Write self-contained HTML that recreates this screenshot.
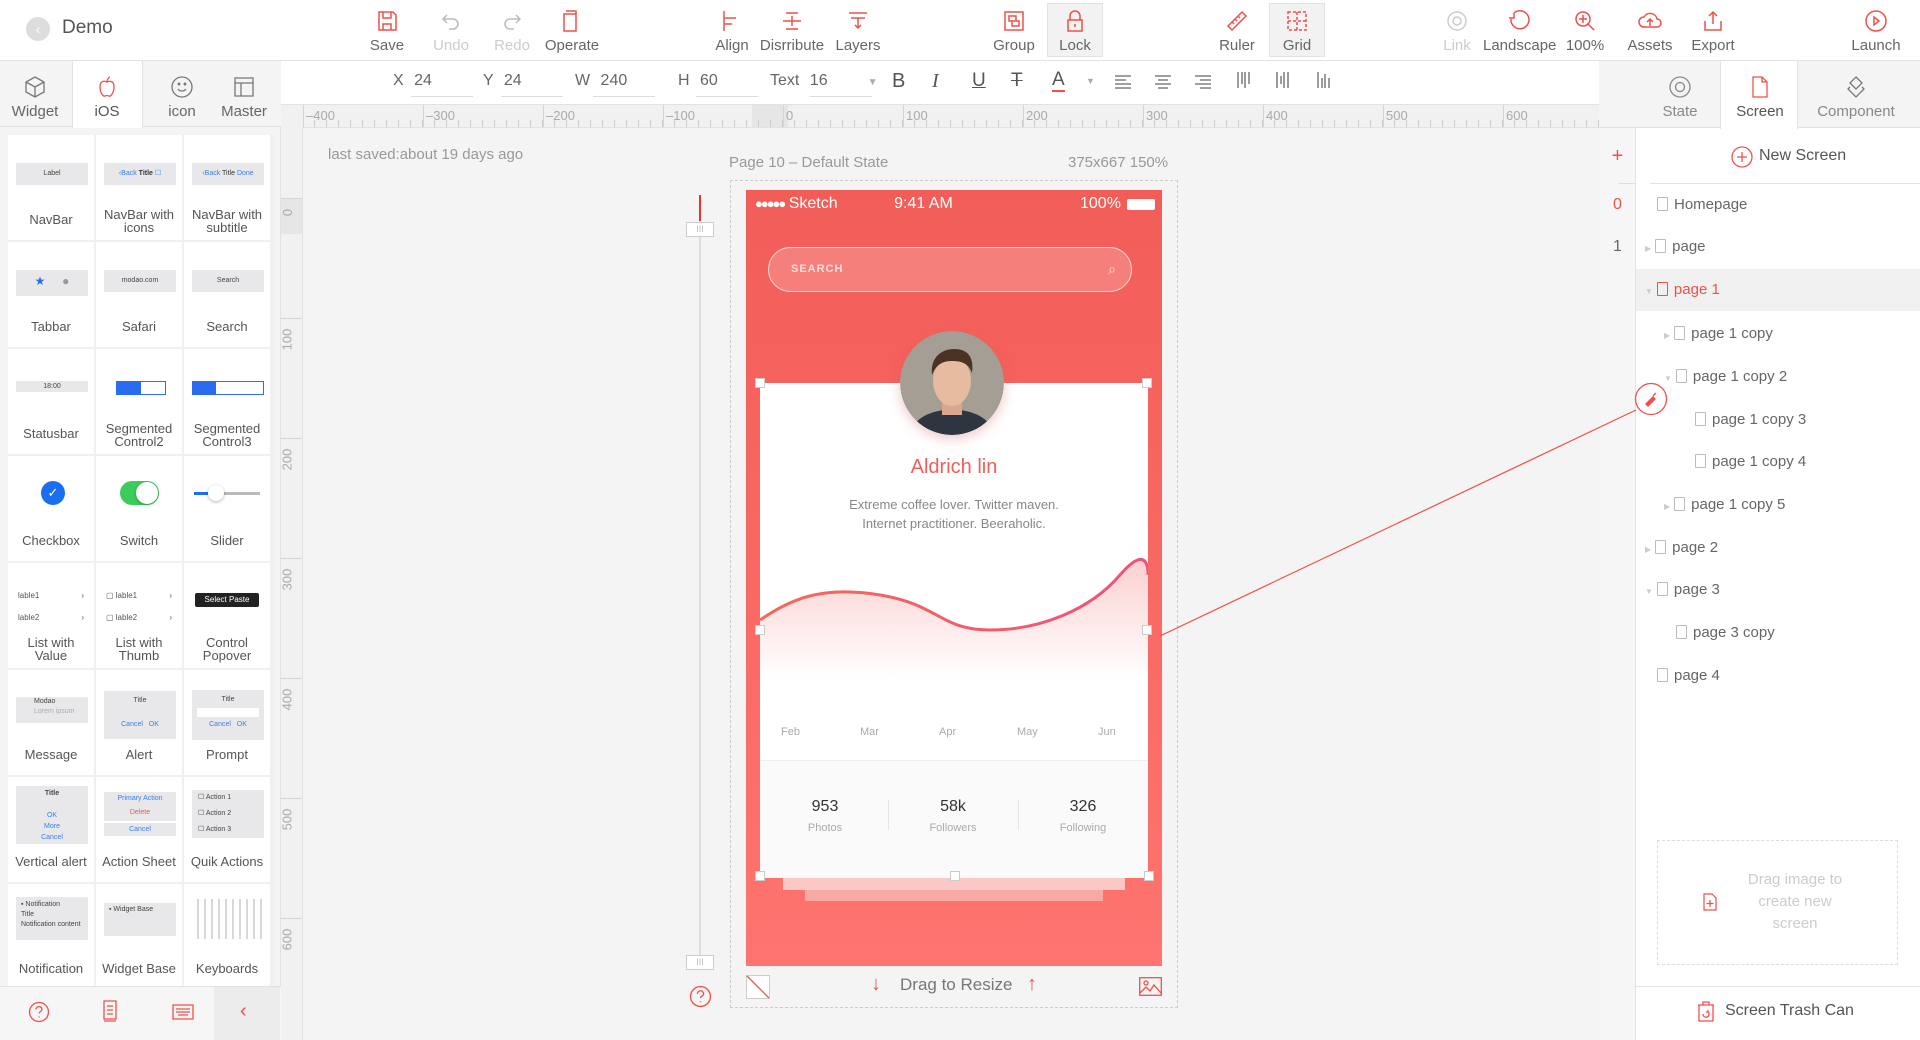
<!DOCTYPE html>
<html><head><meta charset="utf-8"><style>
*{box-sizing:border-box;margin:0;padding:0}
html{overflow:hidden}
body{width:1920px;height:1040px;overflow:hidden;background:#f4f4f4;font-family:"Liberation Sans",sans-serif;color:#666;position:relative}
.a{position:absolute}
.tb{position:absolute;top:0;text-align:center;font-size:15px;color:#666;width:70px;margin-left:-35px}
.tb svg{display:block;margin:9px auto 4px;height:24px;width:24px}
.tb.d{color:#ccc}
.cell{position:absolute;width:88px;height:107px;background:#fff;border-right:2px solid #f0f0f0;border-bottom:2px solid #f0f0f0;text-align:center;font-size:13px;color:#555;line-height:13px}
.cell .th{position:absolute;left:8px;top:28px;width:72px;height:22px;background:#e8e8ea;font-size:7px;color:#444;line-height:22px}
.cell .lb{position:absolute;left:0;right:0;top:73px}
.pg{position:absolute;font-size:15px;color:#666;height:20px;line-height:20px}
.pg i{display:inline-block;width:11px;height:14px;border:1px solid #bbb;vertical-align:-2px;margin-right:6px;border-radius:1px}
.fi{position:absolute;top:72px;font-size:16px;color:#666}
.fi u{position:absolute;left:18px;top:24px;height:1px;background:#ddd;text-decoration:none;display:block}
</style></head><body>
<!-- top bar -->
<div class="a" style="left:0;top:0;width:1920px;height:61px;background:#fff;border-bottom:1px solid #e2e2e2"></div>
<div class="a" style="left:26px;top:17px;width:24px;height:24px;border-radius:50%;background:#ddd;color:#fff;font-size:14px;text-align:center;line-height:24px">‹</div>
<div class="a" style="left:62px;top:17px;font-size:19px;color:#555">Demo</div>

<div class="tb" style="left:387px"><svg viewBox="0 0 24 24" fill="none" stroke="#f0504a" stroke-width="1.5"><path d="M4 3h14l3 3v15H4z M8 3v6h8V3 M8 21v-6h8v6"/></svg>Save</div>
<div class="tb d" style="left:451px"><svg viewBox="0 0 24 24" fill="none" stroke="#bbb" stroke-width="1.5"><path d="M8 6L4 10l4 4 M4 10h10a5 5 0 010 10h-4"/></svg>Undo</div>
<div class="tb d" style="left:512px"><svg viewBox="0 0 24 24" fill="none" stroke="#bbb" stroke-width="1.5"><path d="M16 6l4 4-4 4 M20 10H10a5 5 0 000 10h4"/></svg>Redo</div>
<div class="tb" style="left:572px"><svg viewBox="0 0 24 24" fill="none" stroke="#f0504a" stroke-width="1.5"><path d="M6 2h10v3 M4 5h12v17H4z"/></svg>Operate</div>
<div class="tb" style="left:732px"><svg viewBox="0 0 24 24" fill="none" stroke="#f0504a" stroke-width="1.5"><path d="M4 2v20 M4 9h12 M4 15h8"/></svg>Align</div>
<div class="tb" style="left:792px"><svg viewBox="0 0 24 24" fill="none" stroke="#f0504a" stroke-width="1.5"><path d="M6 4h12 M3 12h18 M6 20h12 M12 7v10"/></svg>Disrribute</div>
<div class="tb" style="left:858px"><svg viewBox="0 0 24 24" fill="none" stroke="#f0504a" stroke-width="1.5"><path d="M3 4h18 M5 9h14 M12 9v10 M9 16l3 3 3-3"/></svg>Layers</div>
<div class="tb" style="left:1014px"><svg viewBox="0 0 24 24" fill="none" stroke="#f0504a" stroke-width="1.5"><path d="M3 3h18v18H3z M7 7h7v5H7z M10 12h7v5h-7z"/></svg>Group</div>
<div class="a" style="left:1047px;top:3px;width:56px;height:54px;background:#f2f2f2;border:1px solid #e2e2e2"></div>
<div class="tb" style="left:1075px"><svg viewBox="0 0 24 24" fill="none" stroke="#f0504a" stroke-width="1.5"><path d="M7 11V7a5 5 0 0110 0v4 M5 11h14v11H5z M12 15v3"/></svg>Lock</div>
<div class="tb" style="left:1237px"><svg viewBox="0 0 24 24" fill="none" stroke="#f0504a" stroke-width="1.5"><path d="M3 17L17 3l4 4L7 21z M7 13l2 2 M10 10l2 2 M13 7l2 2"/></svg>Ruler</div>
<div class="a" style="left:1269px;top:3px;width:56px;height:54px;background:#f2f2f2;border:1px solid #e2e2e2"></div>
<div class="tb" style="left:1297px"><svg viewBox="0 0 24 24" fill="none" stroke="#f0504a" stroke-width="1.5" stroke-dasharray="3 2"><path d="M3 3h18v18H3z M3 12h18 M12 3v18"/></svg>Grid</div>
<div class="tb d" style="left:1457px"><svg viewBox="0 0 24 24" fill="none" stroke="#ccc" stroke-width="1.5"><circle cx="12" cy="12" r="9"/><circle cx="12" cy="12" r="4"/></svg>Link</div>
<div class="tb" style="left:1518px"><svg viewBox="0 0 24 24" fill="none" stroke="#f0504a" stroke-width="1.5"><path d="M8 4a9 9 0 11-3 6 M8 4v5H3"/></svg>Landscape</div>
<div class="tb" style="left:1585px"><svg viewBox="0 0 24 24" fill="none" stroke="#f0504a" stroke-width="1.5"><circle cx="10" cy="10" r="7"/><path d="M15 15l6 6 M10 6v8 M6 10h8"/></svg>100%</div>
<div class="tb" style="left:1650px"><svg viewBox="0 0 24 24" fill="none" stroke="#f0504a" stroke-width="1.5"><path d="M6 18a5 5 0 010-10 7 7 0 0113 2 4 4 0 010 8z M12 17v-7 M9 13l3-3 3 3"/></svg>Assets</div>
<div class="tb" style="left:1713px"><svg viewBox="0 0 24 24" fill="none" stroke="#f0504a" stroke-width="1.5"><path d="M12 15V3 M8 7l4-4 4 4 M4 12v9h16v-9"/></svg>Export</div>
<div class="tb" style="left:1876px"><svg viewBox="0 0 24 24" fill="none" stroke="#f0504a" stroke-width="1.5"><circle cx="12" cy="12" r="10"/><path d="M10 8l5 4-5 4z"/></svg>Launch</div>

<!-- left panel -->
<div class="a" style="left:0;top:61px;width:281px;height:979px;background:#f4f4f4;border-right:1px solid #e2e2e2"></div>
<div class="a" style="left:0;top:61px;width:281px;height:66px;background:#f4f4f4;border-bottom:1px solid #e2e2e2"></div>
<div class="a" style="left:72px;top:61px;width:71px;height:67px;background:#fff;border-left:1px solid #e2e2e2;border-right:1px solid #e2e2e2"></div>
<div class="tb" style="left:35px;top:66px;width:72px;margin-left:-36px"><svg viewBox="0 0 24 24" fill="none" stroke="#777" stroke-width="1.3"><path d="M12 2l9 5v10l-9 5-9-5V7z M3 7l9 5 9-5 M12 12v10"/></svg>Widget</div>
<div class="tb" style="left:107px;top:66px"><svg viewBox="0 0 24 24" fill="none" stroke="#f0504a" stroke-width="1.3"><path d="M12 7c-2-1-7-2-7 5 0 5 3 10 5 9 1-.5 3-.5 4 0 2 1 5-4 5-9 0-7-5-6-7-5z M12 7c0-3 2-5 3-5"/></svg><span style="color:#555">iOS</span></div>
<div class="tb" style="left:182px;top:66px"><svg viewBox="0 0 24 24" fill="none" stroke="#777" stroke-width="1.3"><circle cx="12" cy="12" r="10"/><path d="M8 14a5 5 0 008 0"/><circle cx="9" cy="9" r=".8"/><circle cx="15" cy="9" r=".8"/></svg>icon</div>
<div class="tb" style="left:244px;top:66px"><svg viewBox="0 0 24 24" fill="none" stroke="#777" stroke-width="1.3"><path d="M3 3h18v18H3z M3 8h18 M9 8v13"/></svg>Master</div>

<div class="a" style="left:8px;top:135px;width:266px;height:851px;background:#f0f0f0;overflow:hidden">
<div class="cell" style="left:0;top:0"><div class="th">Label</div><div class="lb" style="top:78px">NavBar</div></div>
<div class="cell" style="left:88px;top:0"><div class="th" style="color:#3a7cf0">‹Back <b style="color:#333">Title</b> ☐</div><div class="lb">NavBar with<br>icons</div></div>
<div class="cell" style="left:176px;top:0"><div class="th" style="color:#3a7cf0">‹Back <span style="color:#333">Title</span> Done</div><div class="lb">NavBar with<br>subtitle</div></div>
<div class="cell" style="left:0;top:107px"><div class="th" style="height:26px;color:#2a6cf0;font-size:12px">★ &nbsp; &nbsp; <span style="color:#999">●</span></div><div class="lb" style="top:78px">Tabbar</div></div>
<div class="cell" style="left:88px;top:107px"><div class="th">modao.com</div><div class="lb" style="top:78px">Safari</div></div>
<div class="cell" style="left:176px;top:107px"><div class="th">Search</div><div class="lb" style="top:78px">Search</div></div>
<div class="cell" style="left:0;top:214px"><div class="th" style="height:11px;line-height:11px;top:32px">18:00</div><div class="lb" style="top:78px">Statusbar</div></div>
<div class="cell" style="left:88px;top:214px"><div class="a" style="left:20px;top:32px;width:50px;height:14px;border:1px solid #2a6cf0;background:linear-gradient(90deg,#2a6cf0 50%,#fff 50%)"></div><div class="lb">Segmented<br>Control2</div></div>
<div class="cell" style="left:176px;top:214px"><div class="a" style="left:8px;top:32px;width:72px;height:14px;border:1px solid #2a6cf0;background:linear-gradient(90deg,#2a6cf0 33%,#fff 33%)"></div><div class="lb">Segmented<br>Control3</div></div>
<div class="cell" style="left:0;top:321px"><div class="a" style="left:33px;top:25px;width:24px;height:24px;border-radius:50%;background:#1a6ef0;color:#fff;font-size:13px;line-height:24px">✓</div><div class="lb" style="top:78px">Checkbox</div></div>
<div class="cell" style="left:88px;top:321px"><div class="a" style="left:24px;top:25px;width:39px;height:24px;border-radius:12px;background:#3ccc5c"></div><div class="a" style="left:40px;top:26px;width:22px;height:22px;border-radius:50%;background:#fff;box-shadow:0 1px 3px rgba(0,0,0,.3)"></div><div class="lb" style="top:78px">Switch</div></div>
<div class="cell" style="left:176px;top:321px"><div class="a" style="left:10px;top:36px;width:66px;height:3px;background:linear-gradient(90deg,#1a6ef0 30%,#bbb 30%)"></div><div class="a" style="left:24px;top:29px;width:16px;height:16px;border-radius:50%;background:#fff;box-shadow:0 1px 3px rgba(0,0,0,.3)"></div><div class="lb" style="top:78px">Slider</div></div>
<div class="cell" style="left:0;top:428px"><div class="a" style="left:10px;top:22px;font-size:8px;text-align:left;width:66px;line-height:22px">lable1 <span style="float:right">›</span><br>lable2 <span style="float:right">›</span></div><div class="lb">List with<br>Value</div></div>
<div class="cell" style="left:88px;top:428px"><div class="a" style="left:10px;top:22px;font-size:8px;text-align:left;width:66px;line-height:22px">▢ lable1 <span style="float:right">›</span><br>▢ lable2 <span style="float:right">›</span></div><div class="lb">List with<br>Thumb</div></div>
<div class="cell" style="left:176px;top:428px"><div class="a" style="left:11px;top:30px;width:64px;height:14px;background:#222;color:#fff;font-size:8px;line-height:14px;border-radius:2px">Select Paste</div><div class="lb">Control<br>Popover</div></div>
<div class="cell" style="left:0;top:535px"><div class="th" style="top:27px;height:26px;line-height:10px;text-align:left;padding-left:18px">Modao<br><span style="color:#aaa">Lorem ipsum</span></div><div class="lb" style="top:78px">Message</div></div>
<div class="cell" style="left:88px;top:535px"><div class="th" style="top:21px;height:48px;line-height:12px;padding-top:4px">Title<br><br><span style="color:#3a7cf0">Cancel &nbsp; OK</span></div><div class="lb" style="top:78px">Alert</div></div>
<div class="cell" style="left:176px;top:535px"><div class="th" style="top:20px;height:50px;line-height:12px;padding-top:4px">Title<br><span style="display:block;background:#fff;margin:2px 5px;height:9px"></span><span style="color:#3a7cf0">Cancel &nbsp; OK</span></div><div class="lb" style="top:78px">Prompt</div></div>
<div class="cell" style="left:0;top:642px"><div class="th" style="top:9px;height:58px;line-height:11px;padding-top:2px"><b>Title</b><br><br><span style="color:#3a7cf0">OK<br>More<br>Cancel</span></div><div class="lb" style="top:78px">Vertical alert</div></div>
<div class="cell" style="left:88px;top:642px"><div class="th" style="top:15px;height:29px;line-height:14px;color:#3a7cf0">Primary Action<br><span style="color:#e55">Delete</span></div><div class="th" style="top:46px;height:13px;line-height:13px;color:#3a7cf0">Cancel</div><div class="lb" style="top:78px">Action Sheet</div></div>
<div class="cell" style="left:176px;top:642px"><div class="th" style="top:13px;height:48px;line-height:16px;text-align:left;padding-left:6px">☐ Action 1<br>☐ Action 2<br>☐ Action 3</div><div class="lb" style="top:78px">Quik Actions</div></div>
<div class="cell" style="left:0;top:749px"><div class="th" style="top:13px;height:43px;line-height:10px;text-align:left;padding:3px 5px">▪ Notification<br>Title<br>Notification content</div><div class="lb" style="top:78px">Notification</div></div>
<div class="cell" style="left:88px;top:749px"><div class="th" style="top:19px;height:33px;line-height:14px;text-align:left;padding-left:5px">▪ Widget Base</div><div class="lb" style="top:78px">Widget Base</div></div>
<div class="cell" style="left:176px;top:749px"><div class="th" style="top:15px;height:40px;background:repeating-linear-gradient(90deg,#fff 0 5px,#d8d8dc 5px 7px)"></div><div class="lb" style="top:78px">Keyboards</div></div>
</div>
<!-- bottom-left toolbar -->
<div class="a" style="left:0;top:986px;width:281px;height:54px;background:#f6f6f6;border-top:1px solid #e2e2e2"></div>
<div class="a" style="left:214px;top:987px;width:66px;height:53px;background:#ececec"></div>
<svg class="a" style="left:28px;top:1001px" width="22" height="22" viewBox="0 0 22 22" fill="none" stroke="#f0504a" stroke-width="1.3"><circle cx="11" cy="11" r="9.5"/><path d="M8 8.5a3 3 0 016 0c0 2-3 2-3 4 M11 15.5v1"/></svg>
<svg class="a" style="left:102px;top:1000px" width="16" height="22" viewBox="0 0 16 22" fill="none" stroke="#f0504a" stroke-width="1.3"><path d="M2 1h12v18H2z M5 6h6 M5 10h6 M5 14h6 M2 21h12"/></svg>
<svg class="a" style="left:172px;top:1004px" width="22" height="16" viewBox="0 0 22 16" fill="none" stroke="#f0504a" stroke-width="1.3"><path d="M1 1h20v14H1z M4 5h14 M4 8h14 M6 11h10"/></svg>
<div class="a" style="left:240px;top:1000px;color:#f0504a;font-size:20px">‹</div>

<!-- format bar -->
<div class="a" style="left:281px;top:61px;width:1318px;height:44px;background:#fff"></div>
<div class="fi" style="left:393px">X <span style="margin-left:6px">24</span><u style="width:62px"></u></div>
<div class="fi" style="left:483px">Y <span style="margin-left:6px">24</span><u style="width:62px"></u></div>
<div class="fi" style="left:575px">W <span style="margin-left:6px">240</span><u style="width:62px"></u></div>
<div class="fi" style="left:678px">H <span style="margin-left:6px">60</span><u style="width:62px"></u></div>
<div class="fi" style="left:770px">Text <span style="margin-left:6px">16</span><span style="margin-left:40px;font-size:10px;color:#aaa">▼</span><u style="left:40px;width:62px"></u></div>
<div class="a" style="left:892px;top:70px;font-size:20px;color:#555">B</div>
<div class="a" style="left:932px;top:70px;font-size:20px;color:#555;font-family:'Liberation Serif',serif;font-style:italic">I</div>
<div class="a" style="left:972px;top:70px;font-size:19px;color:#555;text-decoration:underline">U</div>
<div class="a" style="left:1011px;top:70px;font-size:19px;color:#555;text-decoration:line-through">T</div>
<div class="a" style="left:1052px;top:70px;font-size:19px;color:#555;border-bottom:2px solid #f0504a;line-height:20px">A</div>
<div class="a" style="left:1086px;top:76px;font-size:9px;color:#aaa">▼</div>
<svg class="a" style="left:1115px;top:72px" width="110" height="20" viewBox="0 0 110 20" fill="none" stroke="#666" stroke-width="1.3"><path d="M0 4h16 M0 8h11 M0 12h16 M0 16h16 M40 4h16 M43 8h10 M40 12h16 M43 16h10 M80 4h16 M85 8h11 M80 12h16 M85 16h11"/></svg>
<svg class="a" style="left:1235px;top:70px" width="110" height="22" viewBox="0 0 110 22" fill="none" stroke="#666" stroke-width="1.3"><path d="M3 2v16 M7 2v12 M10 2v16 M14 2v12 M42 2v16 M46 6v8 M49 2v16 M53 2v16 M83 2v16 M87 8v10 M90 4v14 M94 8v10"/></svg>

<!-- rulers -->
<div class="a" style="left:281px;top:104px;width:1318px;height:24px;background:#f1f1f1;border-top:1px solid #e2e2e2;border-bottom:1px solid #e2e2e2;overflow:hidden;font-size:13px;color:#aaa">
<div class="a" style="left:471px;top:0;width:36px;height:22px;background:#e6e6e6"></div>
<div class="a" style="left:0;top:0;width:1318px;height:22px;background:repeating-linear-gradient(90deg,transparent 0 11px,#ccc 11px 12px) 22px 15px/100% 7px no-repeat"></div>
<div class="a" style="left:22px;top:0;width:1296px;height:22px;background:repeating-linear-gradient(90deg,#d4d4d4 0 1px,transparent 1px 120px)"></div>
<span class="a" style="left:25px;top:3px">–400</span><span class="a" style="left:145px;top:3px">–300</span><span class="a" style="left:265px;top:3px">–200</span><span class="a" style="left:385px;top:3px">–100</span><span class="a" style="left:505px;top:3px">0</span><span class="a" style="left:625px;top:3px">100</span><span class="a" style="left:745px;top:3px">200</span><span class="a" style="left:865px;top:3px">300</span><span class="a" style="left:985px;top:3px">400</span><span class="a" style="left:1105px;top:3px">500</span><span class="a" style="left:1225px;top:3px">600</span>
</div>
<div class="a" style="left:281px;top:127px;width:22px;height:913px;background:#f1f1f1;border-right:1px solid #e2e2e2;font-size:13px;color:#aaa;overflow:hidden">
<div class="a" style="left:0;top:71px;width:21px;height:36px;background:#e6e6e6"></div>
<div class="a" style="left:0;top:71px;width:21px;height:840px;background:repeating-linear-gradient(180deg,#d4d4d4 0 1px,transparent 1px 120px)"></div>
<span class="a" style="left:3px;top:78px;transform:rotate(-90deg)">0</span>
<span class="a" style="left:-5px;top:205px;transform:rotate(-90deg)">100</span><span class="a" style="left:-5px;top:325px;transform:rotate(-90deg)">200</span><span class="a" style="left:-5px;top:445px;transform:rotate(-90deg)">300</span><span class="a" style="left:-5px;top:565px;transform:rotate(-90deg)">400</span><span class="a" style="left:-5px;top:685px;transform:rotate(-90deg)">500</span><span class="a" style="left:-5px;top:805px;transform:rotate(-90deg)">600</span>
</div>

<!-- canvas -->
<div class="a" style="left:328px;top:146px;font-size:15px;color:#999">last saved:about 19 days ago</div>
<div class="a" style="left:729px;top:154px;font-size:15px;color:#999">Page 10 – Default State</div>
<div class="a" style="left:1068px;top:154px;font-size:15px;color:#999">375x667 150%</div>
<div class="a" style="left:730px;top:180px;width:448px;height:828px;border:1px dashed #ccc"></div>
<div class="a" style="left:699px;top:195px;width:2px;height:765px;background:#ddd"></div>
<div class="a" style="left:699px;top:195px;width:2px;height:26px;background:#f0302a"></div>
<div class="a" style="left:686px;top:222px;width:28px;height:15px;border:1px solid #ccc;background:#fff;font-size:9px;text-align:center;line-height:13px;color:#bbb">III</div>
<div class="a" style="left:686px;top:955px;width:28px;height:15px;border:1px solid #ccc;background:#fff;font-size:9px;text-align:center;line-height:13px;color:#bbb">III</div>
<svg class="a" style="left:689px;top:985px" width="23" height="23" viewBox="0 0 22 22" fill="none" stroke="#f0504a" stroke-width="1.3"><circle cx="11" cy="11" r="9.5"/><path d="M8 8.5a3 3 0 016 0c0 2-3 2-3 4 M11 15.5v1"/></svg>

<!-- phone -->
<div class="a" style="left:746px;top:190px;width:416px;height:776px;background:linear-gradient(180deg,#f25d58,#ff7470);overflow:hidden">
 <div class="a" style="left:9px;top:5px;color:#fff;font-size:16px;width:400px"><span style="letter-spacing:-2px;font-size:13px">●●●●●</span> Sketch <span style="margin-left:52px">9:41 AM</span><span style="position:absolute;left:325px">100%</span><span style="position:absolute;left:372px;top:4px;width:28px;height:11px;background:#fff;border-radius:2px"></span></div>
 <div class="a" style="left:22px;top:57px;width:364px;height:45px;border-radius:23px;border:1.5px solid #ffd2d0;background:rgba(255,255,255,.2);color:#ffdcda;font-size:11px;letter-spacing:1px;line-height:42px;padding-left:22px;font-weight:bold">SEARCH<span style="position:absolute;right:14px;top:0;font-weight:normal;font-size:14px">⌕</span></div>
 <div class="a" style="left:14px;top:193px;width:388px;height:495px;background:#fff"></div>
 <div class="a" style="left:14px;top:570px;width:388px;height:118px;background:#fafafa;border-top:1px solid #eee"></div>
 <div class="a" style="left:37px;top:688px;width:342px;height:12px;background:#fbc8c6"></div>
 <div class="a" style="left:59px;top:700px;width:298px;height:11px;background:#f8a9a6"></div>
 <svg class="a" style="left:154px;top:141px;border-radius:50%;box-shadow:0 4px 12px rgba(200,80,80,.3)" width="104" height="104" viewBox="0 0 104 104"><defs><clipPath id="c"><circle cx="52" cy="52" r="52"/></clipPath></defs><g clip-path="url(#c)"><rect width="104" height="104" fill="#a59e94"/><path d="M10 104c4-18 20-24 42-26 22 2 38 8 42 26z" fill="#2e3440"/><path d="M42 70h20v14H42z" fill="#d9a88c"/><ellipse cx="52" cy="50" rx="19" ry="25" fill="#e6bba0"/><path d="M32 44c-2-18 10-26 22-26 14 0 20 8 18 24-3-8-8-12-20-12-10 0-16 4-20 14z" fill="#4a3224"/></g></svg>
 <div class="a" style="left:0;width:416px;top:266px;text-align:center;font-size:20px;color:#f25d58">Aldrich lin</div>
 <div class="a" style="left:0;width:416px;top:305px;text-align:center;font-size:13px;color:#888;line-height:19px">Extreme coffee lover. Twitter maven.<br>Internet practitioner. Beeraholic.</div>
 <svg class="a" style="left:14px;top:360px" width="388" height="130" viewBox="0 0 388 130"><defs><linearGradient id="g" x1="0" y1="0" x2="0" y2="1"><stop offset="0" stop-color="#fbd0d0"/><stop offset="1" stop-color="#fff"/></linearGradient><linearGradient id="s" x1="0" x2="1"><stop offset="0" stop-color="#f56a5a"/><stop offset="1" stop-color="#f2507a"/></linearGradient></defs><path d="M0 70C30 50 60 35 120 45S180 80 230 80 330 60 360 25 388 25 388 25V130H0z" fill="url(#g)"/><path d="M0 70C30 50 60 35 120 45S180 80 230 80 330 60 360 25 388 25 388 25" fill="none" stroke="url(#s)" stroke-width="3"/></svg>
 <div class="a" style="left:14px;top:536px;width:388px;font-size:11px;color:#aaa"><span class="a" style="left:21px">Feb</span><span class="a" style="left:100px">Mar</span><span class="a" style="left:179px">Apr</span><span class="a" style="left:257px">May</span><span class="a" style="left:338px">Jun</span></div>
 <div class="a" style="left:14px;top:608px;width:388px;text-align:center;font-size:16px;color:#333">
  <span class="a" style="left:20px;width:90px">953</span><span class="a" style="left:148px;width:90px">58k</span><span class="a" style="left:278px;width:90px">326</span>
  <span class="a" style="left:20px;width:90px;top:24px;font-size:11px;color:#aaa">Photos</span><span class="a" style="left:148px;width:90px;top:24px;font-size:11px;color:#aaa">Followers</span><span class="a" style="left:278px;width:90px;top:24px;font-size:11px;color:#aaa">Following</span>
  <span class="a" style="left:128px;top:2px;width:1px;height:30px;background:#e6e6e6"></span><span class="a" style="left:258px;top:2px;width:1px;height:30px;background:#e6e6e6"></span>
 </div>
</div>
<!-- selection handles -->
<div class="a" style="left:755px;top:378px;width:10px;height:10px;background:#fff;border:1px solid #ccc"></div>
<div class="a" style="left:1142px;top:378px;width:10px;height:10px;background:#fff;border:1px solid #ccc"></div>
<div class="a" style="left:755px;top:625px;width:10px;height:10px;background:#fff;border:1px solid #ccc"></div>
<div class="a" style="left:1142px;top:625px;width:10px;height:10px;background:#fff;border:1px solid #ccc"></div>
<div class="a" style="left:755px;top:871px;width:10px;height:10px;background:#fff;border:1px solid #ccc"></div>
<div class="a" style="left:950px;top:871px;width:10px;height:10px;background:#fff;border:1px solid #ccc"></div>
<div class="a" style="left:1144px;top:871px;width:10px;height:10px;background:#fff;border:1px solid #ccc"></div>
<!-- phone bottom bar -->
<svg class="a" style="left:746px;top:975px" width="24" height="24"><rect x=".5" y=".5" width="23" height="23" fill="#fff" stroke="#ccc"/><path d="M1 1L23 23" stroke="#f0504a" stroke-width="1.3"/></svg>
<div class="a" style="left:871px;top:973px;color:#f0504a;font-size:20px">↓</div>
<div class="a" style="left:900px;top:975px;color:#777;font-size:17px">Drag to Resize</div>
<div class="a" style="left:1027px;top:973px;color:#f0504a;font-size:20px">↑</div>
<svg class="a" style="left:1139px;top:977px" width="23" height="19" viewBox="0 0 23 19" fill="none" stroke="#f0504a" stroke-width="1.3"><rect x=".7" y=".7" width="21.6" height="17.6"/><circle cx="7" cy="6" r="2"/><path d="M1 16l6-6 4 4 4-6 7 8"/></svg>

<!-- right panel -->
<div class="a" style="left:1599px;top:61px;width:321px;height:979px;background:#fff;border-left:1px solid #e2e2e2"></div>
<div class="a" style="left:1599px;top:61px;width:37px;height:979px;background:#f6f6f6;border-right:1px solid #e2e2e2"></div>
<div class="a" style="left:1599px;top:61px;width:321px;height:67px;background:#f4f4f4;border-bottom:1px solid #e2e2e2"></div>
<div class="a" style="left:1720px;top:61px;width:78px;height:68px;background:#fff;border-left:1px solid #e2e2e2;border-right:1px solid #e2e2e2"></div>
<div class="tb" style="left:1680px;top:66px;width:80px;margin-left:-40px;color:#888"><svg viewBox="0 0 24 24" fill="none" stroke="#888" stroke-width="1.3"><circle cx="12" cy="12" r="10"/><circle cx="12" cy="12" r="4.5"/></svg>State</div>
<div class="tb" style="left:1760px;top:66px"><svg viewBox="0 0 24 24" fill="none" stroke="#f0504a" stroke-width="1.3"><path d="M5 2h9l5 5v15H5z M14 2v5h5"/></svg><span style="color:#555">Screen</span></div>
<div class="tb" style="left:1856px;top:66px;width:100px;margin-left:-50px;color:#888"><svg viewBox="0 0 24 24" fill="none" stroke="#777" stroke-width="1.3"><path d="M12 2l6 6-6 6-6-6z M6 12l-2 2 8 8 8-8-2-2"/></svg>Component</div>
<div class="a" style="left:1610px;top:145px;width:15px;text-align:center;color:#f0504a;font-size:20px">+</div>
<div class="a" style="left:1619px;top:183px;width:17px;height:1px;background:#ddd"></div>
<div class="a" style="left:1610px;top:196px;width:15px;text-align:center;color:#f0504a;font-size:16px">0</div>
<div class="a" style="left:1610px;top:238px;width:15px;text-align:center;color:#666;font-size:16px">1</div>
<svg class="a" style="left:1731px;top:146px" width="22" height="22" viewBox="0 0 22 22" fill="none" stroke="#f0504a" stroke-width="1.3"><circle cx="11" cy="11" r="10"/><path d="M11 6v10 M6 11h10"/></svg>
<div class="a" style="left:1759px;top:147px;font-size:16px;color:#555">New Screen</div>
<div class="a" style="left:1650px;top:183px;width:270px;height:1px;background:#e2e2e2"></div>
<div class="a" style="left:1636px;top:269px;width:284px;height:42px;background:#f0f0f0"></div>
<div class="pg" style="left:1657px;top:195px"><i></i>Homepage</div>
<div class="pg" style="left:1645px;top:237px"><span style="font-size:8px;color:#ccc;margin-right:4px">▶</span><i></i>page</div>
<div class="pg" style="left:1645px;top:280px;color:#f0504a"><span style="font-size:8px;color:#ccc;margin-right:4px">▼</span><i style="border-color:#f0504a"></i>page 1</div>
<div class="pg" style="left:1664px;top:324px"><span style="font-size:8px;color:#ccc;margin-right:4px">▶</span><i></i>page 1 copy</div>
<div class="pg" style="left:1664px;top:367px"><span style="font-size:8px;color:#ccc;margin-right:4px">▼</span><i></i>page 1 copy 2</div>
<div class="pg" style="left:1695px;top:410px"><i></i>page 1 copy 3</div>
<div class="pg" style="left:1695px;top:452px"><i></i>page 1 copy 4</div>
<div class="pg" style="left:1664px;top:495px"><span style="font-size:8px;color:#ccc;margin-right:4px">▶</span><i></i>page 1 copy 5</div>
<div class="pg" style="left:1645px;top:538px"><span style="font-size:8px;color:#ccc;margin-right:4px">▶</span><i></i>page 2</div>
<div class="pg" style="left:1645px;top:580px"><span style="font-size:8px;color:#ccc;margin-right:4px">▼</span><i></i>page 3</div>
<div class="pg" style="left:1676px;top:623px"><i></i>page 3 copy</div>
<div class="pg" style="left:1657px;top:666px"><i></i>page 4</div>
<div class="a" style="left:1657px;top:840px;width:241px;height:125px;border:1.5px dashed #ddd"></div>
<svg class="a" style="left:1703px;top:893px" width="14" height="18" viewBox="0 0 14 18" fill="none" stroke="#f0504a" stroke-width="1.2"><path d="M1 1h8l4 4v12H1z M7 7v7 M3.5 10.5h7"/></svg>
<div class="a" style="left:1730px;top:869px;width:130px;text-align:center;font-size:15px;color:#ccc;line-height:22px">Drag image to<br>create new<br>screen</div>
<div class="a" style="left:1636px;top:986px;width:284px;height:1px;background:#e2e2e2"></div>
<svg class="a" style="left:1697px;top:1001px" width="18" height="21" viewBox="0 0 18 21" fill="none" stroke="#f0504a" stroke-width="1.3"><path d="M1 4h16 M6 4V1h6v3 M2 4v16h14V4 M6 13a3 3 0 105-2 M11 9v2h-2"/></svg>
<div class="a" style="left:1725px;top:1002px;font-size:16px;color:#555">Screen Trash Can</div>

<!-- connector (on top) -->
<svg class="a" style="left:0;top:0;pointer-events:none" width="1920" height="1040"><path d="M1160 636L1636 410" stroke="#f0504a" stroke-width="1.2"/><circle cx="1651" cy="399" r="15.5" fill="#fff" stroke="#f0504a" stroke-width="1.3"/><path d="M1645 404l8-8 3 3-8 8z" fill="#f0504a"/><path d="M1653 396l3-3" stroke="#f0504a" stroke-width="1.3"/></svg>
</body></html>
